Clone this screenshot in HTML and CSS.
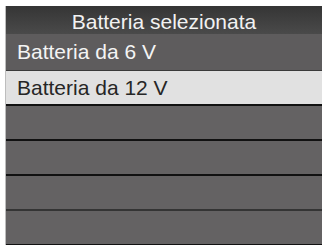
FILE: index.html
```html
<!DOCTYPE html>
<html>
<head>
<meta charset="utf-8">
<link rel="stylesheet" href="styles.css">
</head>
<body>
<div class="panel">
  <div class="header">Batteria selezionata</div>
  <div class="row row-dark">Batteria da 6 V</div>
  <div class="row row-selected">Batteria da 12 V</div>
  <div class="row row-empty"></div>
  <div class="row row-empty"></div>
  <div class="row row-empty line-soft"></div>
  <div class="row row-empty"></div>
</div>
</body>
</html>
```
FILE: styles.css
```css
html, body {
  margin: 0;
  padding: 0;
  background: #ffffff;
}
body {
  font-family: "Liberation Sans", Arial, sans-serif;
}
.panel {
  margin: 6px 0 0 5px;
  width: 317px;
  display: flex;
  flex-direction: column;
  border-left: 1px solid #bdbdbd;
  box-sizing: border-box;
}
.header {
  height: 28px;
  background: linear-gradient(#353535, #4a4a4a);
  color: #f2f2f2;
  font-size: 21px;
  line-height: 28px;
  text-align: center;
  padding-top: 2px;
  box-sizing: border-box;
}
.row {
  height: 35px;
  box-sizing: border-box;
  border-bottom: 2px solid #111111;
  font-size: 21px;
  line-height: 33px;
  padding-left: 11px;
}
.row-dark {
  height: 37px;
  background: #5e5c5d;
  color: #f4f4f4;
  border-bottom: 1px solid #3a3a3a;
  line-height: 36px;
}
.row-selected {
  height: 35px;
  background: #e1e1e1;
  color: #262626;
}
.row-empty {
  background: #646263;
}
.line-soft {
  border-bottom-color: #343434;
}
```
